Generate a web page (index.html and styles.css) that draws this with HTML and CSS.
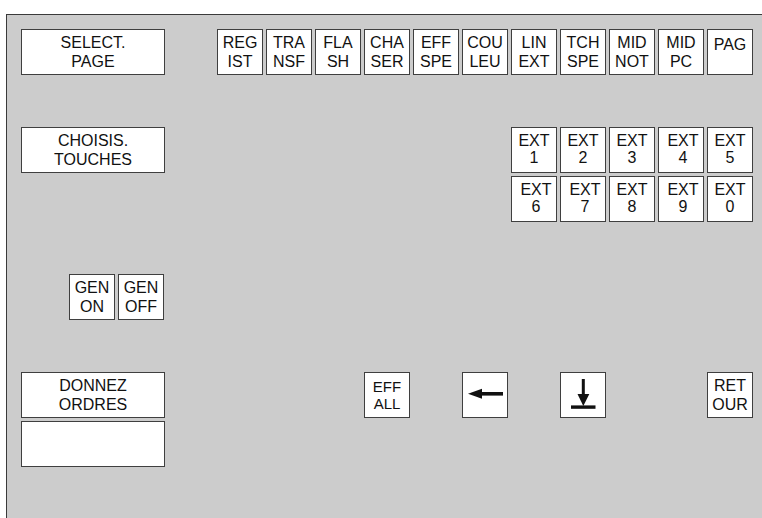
FILE: index.html
```html
<!DOCTYPE html>
<html lang="fr">
<head>
  <meta charset="UTF-8" />
  <title>Console - Sélection</title>
  <link rel="stylesheet" href="styles.css">
</head>
<body>

  <div class="panel">
    <div class="keys">
      <div class="key wide col-1 row-1">SELECT.<br>PAGE</div>

      <div class="key col-5 row-1">REG<br>IST</div>
      <div class="key col-6 row-1">TRA<br>NSF</div>
      <div class="key col-7 row-1">FLA<br>SH</div>
      <div class="key col-8 row-1">CHA<br>SER</div>
      <div class="key col-9 row-1">EFF<br>SPE</div>
      <div class="key col-10 row-1">COU<br>LEU</div>
      <div class="key col-11 row-1">LIN<br>EXT</div>
      <div class="key col-12 row-1">TCH<br>SPE</div>
      <div class="key col-13 row-1">MID<br>NOT</div>
      <div class="key col-14 row-1">MID<br>PC</div>
      <div class="key top col-15 row-1">PAG</div>

      <div class="key wide col-1 row-3">CHOISIS.<br>TOUCHES</div>

      <div class="key ext col-11 row-3">EXT<br>1</div>
      <div class="key ext col-12 row-3">EXT<br>2</div>
      <div class="key ext col-13 row-3">EXT<br>3</div>
      <div class="key ext shift col-14 row-3">EXT<br>4</div>
      <div class="key ext col-15 row-3">EXT<br>5</div>
      <div class="key ext shift col-11 row-4">EXT<br>6</div>
      <div class="key ext shift col-12 row-4">EXT<br>7</div>
      <div class="key ext col-13 row-4">EXT<br>8</div>
      <div class="key ext shift col-14 row-4">EXT<br>9</div>
      <div class="key ext col-15 row-4">EXT<br>0</div>

      <div class="key gen col-2 row-6">GEN<br>ON</div>
      <div class="key gen col-3 row-6">GEN<br>OFF</div>

      <div class="key wide col-1 row-8">DONNEZ<br>ORDRES</div>
      <div class="key wide entry col-1 row-9"></div>

      <div class="key small col-8 row-8">EFF<br>ALL</div>
      <div class="key col-10 row-8">
        <svg class="icon" viewBox="0 0 44 44" width="44" height="44">
          <polygon points="5,20.8 19,15.8 19,25.8" fill="#111" />
          <rect x="18" y="19" width="22" height="3.6" fill="#111" />
        </svg>
      </div>
      <div class="key col-12 row-8">
        <svg class="icon" viewBox="0 0 44 44" width="44" height="44">
          <rect x="20.8" y="6" width="3" height="17" fill="#111" />
          <polygon points="16.5,21 28.3,21 22.3,33" fill="#111" />
          <rect x="10" y="32.4" width="24.5" height="3.4" fill="#111" />
        </svg>
      </div>
      <div class="key col-15 row-8">RET<br>OUR</div>
    </div>
  </div>

</body>
</html>
```

FILE: styles.css
```css
body {
  margin: 0;
  background: #ffffff;
  font-family: 'Liberation Sans', Arial, Helvetica, sans-serif;
  color: #111;
}

.panel {
  box-sizing: border-box;
  margin: 14px 0 0 6px;
  width: calc(100vw - 6px);
  height: calc(100vh - 14px);
  padding: 14px;
  background: #cccccc;
  border-top: 1px solid #3a3a3a;
  border-left: 1px solid #3a3a3a;
  overflow: hidden;
}

.keys {
  display: grid;
  grid-template-columns: repeat(15, 46px);
  grid-auto-rows: 46px;
  gap: 3px;
}

.key {
  box-sizing: border-box;
  display: flex;
  align-items: center;
  justify-content: center;
  text-align: center;
  background: #ffffff;
  border: 1px solid #3f3f3f;
  font-size: 16px;
  line-height: 19px;
}

.key.wide {
  grid-column-end: span 3;
}

.key.top {
  align-items: flex-start;
  padding-top: 5px;
}

.key.ext {
  line-height: 17px;
  padding-bottom: 2px;
}

.key.shift {
  padding-left: 4px;
}

.key.small {
  font-size: 15px;
  line-height: 17px;
}

.key.gen {
  margin-left: -1px;
  margin-right: 1px;
}

.icon {
  display: block;
}

/* grid placement */
.col-1 { grid-column-start: 1; }
.col-2 { grid-column-start: 2; }
.col-3 { grid-column-start: 3; }
.col-5 { grid-column-start: 5; }
.col-6 { grid-column-start: 6; }
.col-7 { grid-column-start: 7; }
.col-8 { grid-column-start: 8; }
.col-9 { grid-column-start: 9; }
.col-10 { grid-column-start: 10; }
.col-11 { grid-column-start: 11; }
.col-12 { grid-column-start: 12; }
.col-13 { grid-column-start: 13; }
.col-14 { grid-column-start: 14; }
.col-15 { grid-column-start: 15; }

.row-1 { grid-row: 1; }
.row-3 { grid-row: 3; }
.row-4 { grid-row: 4; }
.row-6 { grid-row: 6; }
.row-8 { grid-row: 8; }
.row-9 { grid-row: 9; }
```
